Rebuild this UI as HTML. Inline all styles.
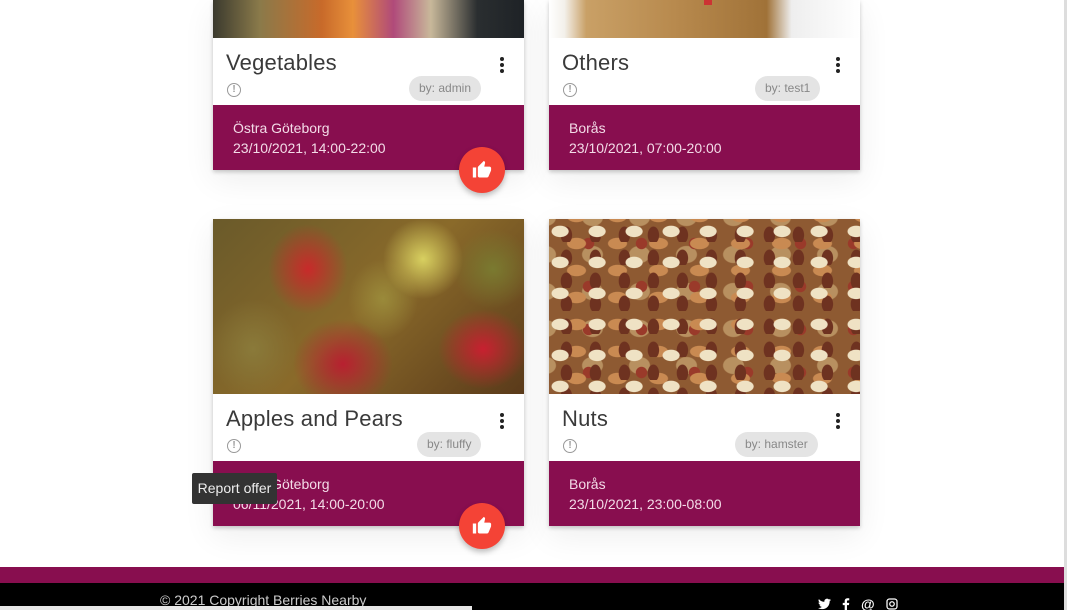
<!DOCTYPE html>
<html><head><meta charset="utf-8"><style>
*{box-sizing:border-box;margin:0;padding:0}
body{width:1067px;height:610px;overflow:hidden;background:#fff;font-family:"Liberation Sans",sans-serif;position:relative}
.card{position:absolute;width:311px;background:#fff;box-shadow:0 2px 4px rgba(0,0,0,.2),0 10px 30px rgba(0,0,0,.07)}
.img{width:100%}
.title{position:absolute;left:13px;font-size:22px;color:#3a3a3a;font-weight:300;letter-spacing:.2px}
.dots{position:absolute;right:20px;width:4px}
.dots i{display:block;width:4px;height:4px;border-radius:50%;background:#222;margin-bottom:2px}
.warn{position:absolute;left:14px;width:14px;height:14px;border:1.5px solid #999;border-radius:50%;font-size:10px;color:#999;text-align:center;line-height:11px;font-weight:bold}
.by{position:absolute;height:25px;border-radius:13px;background:#e4e4e4;color:#888;font-size:12px;line-height:25px;padding:0 10px}
.mag{position:absolute;left:0;width:100%;height:65px;background:#880e4f;color:#f3dbe7;font-size:14px;padding:14px 20px;line-height:19.5px}
.fab{position:absolute;width:46px;height:46px;border-radius:50%;background:#f44336;box-shadow:0 3px 6px rgba(0,0,0,.25)}
.fab svg{position:absolute;left:13px;top:13px}
</style></head><body>
<div style="position:absolute;right:0;top:0;width:3px;height:610px;background:#ddd"></div>

<div class="card" style="left:213px;top:0;height:170px">
 <div class="img" style="height:38px;background:linear-gradient(90deg,#3b3a2e 0%,#8a7a4a 15%,#c86a2a 35%,#e8903a 45%,#b04a7a 58%,#c8b89a 70%,#2a2e30 85%,#1e2226 100%)"></div>
 <div class="title" style="top:50px">Vegetables</div>
 <div class="dots" style="top:57px"><i></i><i></i><i></i></div>
 <div class="warn" style="top:83px">!</div>
 <div class="by" style="left:196px;top:76px">by: admin</div>
 <div class="mag" style="top:105px">Östra Göteborg<br>23/10/2021, 14:00-22:00</div>
</div>
<div class="fab" style="left:459px;top:147px"><svg width="20" height="20" viewBox="0 0 24 24"><path fill="#fff" d="M1 21h4V9H1v12zm22-11c0-1.1-.9-2-2-2h-6.3l1-4.6v-.3c0-.4-.2-.8-.4-1.1L14.2 1 7.6 7.6C7.2 7.9 7 8.4 7 9v10c0 1.1.9 2 2 2h9c.8 0 1.5-.5 1.8-1.2l3-7.1c.1-.2.1-.5.1-.7v-2z"/></svg></div>

<div class="card" style="left:549px;top:0;height:170px">
 <div class="img" style="height:38px;background:linear-gradient(90deg,#fff 0%,#f3f0ea 5%,#c9a066 12%,#b88a4e 40%,#a07238 70%,#eee 78%,#fff 100%)"><div style="position:absolute;left:155px;top:0;width:8px;height:5px;background:#c33"></div></div>
 <div class="title" style="top:50px">Others</div>
 <div class="dots" style="top:57px"><i></i><i></i><i></i></div>
 <div class="warn" style="top:83px">!</div>
 <div class="by" style="left:206px;top:76px">by: test1</div>
 <div class="mag" style="top:105px">Borås<br>23/10/2021, 07:00-20:00</div>
</div>

<div class="card" style="left:213px;top:219px;height:307px">
 <div class="img" style="height:175px;background:
 radial-gradient(ellipse 40px 45px at 95px 50px,#c82a2a,transparent),
 radial-gradient(ellipse 40px 40px at 210px 40px,#d8d060,transparent),
 radial-gradient(ellipse 45px 40px at 270px 130px,#c82030,transparent),
 radial-gradient(ellipse 50px 45px at 130px 145px,#b82030,transparent),
 radial-gradient(ellipse 45px 50px at 40px 130px,#8a7a3a,transparent),
 radial-gradient(ellipse 35px 40px at 170px 80px,#9a8a3a,transparent),
 radial-gradient(ellipse 40px 40px at 280px 50px,#7a7a30,transparent),
 linear-gradient(135deg,#6a5a2a,#8a6a2a 50%,#5a3a1a)"></div>
 <div class="title" style="top:187px">Apples and Pears</div>
 <div class="dots" style="top:194px"><i></i><i></i><i></i></div>
 <div class="warn" style="top:220px">!</div>
 <div class="by" style="left:204px;top:213px">by: fluffy</div>
 <div class="mag" style="top:242px">Östra Göteborg<br>06/11/2021, 14:00-20:00</div>
</div>
<div class="fab" style="left:459px;top:503px"><svg width="20" height="20" viewBox="0 0 24 24"><path fill="#fff" d="M1 21h4V9H1v12zm22-11c0-1.1-.9-2-2-2h-6.3l1-4.6v-.3c0-.4-.2-.8-.4-1.1L14.2 1 7.6 7.6C7.2 7.9 7 8.4 7 9v10c0 1.1.9 2 2 2h9c.8 0 1.5-.5 1.8-1.2l3-7.1c.1-.2.1-.5.1-.7v-2z"/></svg></div>
<div style="position:absolute;left:192px;top:473px;width:85px;height:31px;background:#333;color:#eee;font-size:14px;line-height:31px;text-align:center;border-radius:2px">Report offer</div>

<div class="card" style="left:549px;top:219px;height:307px">
 <div class="img" style="height:175px;background:
 radial-gradient(ellipse 9px 6px at 30% 40%,#efe2c4 0 90%,transparent) 0 0/37px 31px,
 radial-gradient(ellipse 6px 9px at 60% 70%,#6e3220 0 90%,transparent) 0 0/29px 23px,
 radial-gradient(ellipse 10px 6px at 50% 50%,#c98a52 0 90%,transparent) 7px 11px/41px 27px,
 radial-gradient(ellipse 6px 6px at 50% 50%,#9a3a2a 0 90%,transparent) 13px 3px/53px 43px,
 radial-gradient(ellipse 11px 9px at 50% 50%,#b89060 0 90%,transparent) 20px 17px/47px 37px,
 #8e5a32"></div>
 <div class="title" style="top:187px">Nuts</div>
 <div class="dots" style="top:194px"><i></i><i></i><i></i></div>
 <div class="warn" style="top:220px">!</div>
 <div class="by" style="left:186px;top:213px">by: hamster</div>
 <div class="mag" style="top:242px">Borås<br>23/10/2021, 23:00-08:00</div>
</div>

<div style="position:absolute;left:0;top:567px;width:1064px;height:16px;background:#880e4f"></div>
<div style="position:absolute;left:0;top:583px;width:1064px;height:27px;background:#000"></div>
<div style="position:absolute;left:160px;top:592px;color:#ccc;font-size:14px">© 2021 Copyright Berries Nearby</div>
<div style="position:absolute;left:0;top:606px;width:472px;height:4px;background:#e8e8e8"></div>
<div style="position:absolute;left:818px;top:596px;color:#fff;font-size:13px;font-weight:bold;display:flex;gap:11px;align-items:center">
 <svg width="13" height="12" viewBox="0 0 24 20"><path fill="#fff" d="M24 2.4a10 10 0 0 1-2.8.8A5 5 0 0 0 23.3.5a10 10 0 0 1-3.1 1.2A4.9 4.9 0 0 0 11.8 6 14 14 0 0 1 1.7.9a4.9 4.9 0 0 0 1.5 6.6 5 5 0 0 1-2.2-.6 4.9 4.9 0 0 0 3.9 4.9 5 5 0 0 1-2.2.1 4.9 4.9 0 0 0 4.600 3.4A9.9 9.9 0 0 1 0 17.3 14 14 0 0 0 7.5 19.5c9 0 14-7.5 14-14v-.6A10 10 0 0 0 24 2.4z"/></svg>
 <svg width="8" height="13" viewBox="0 0 10 20"><path fill="#fff" d="M6.5 20v-9h3l.5-3.5H6.5V5.3c0-1 .3-1.7 1.7-1.7H10V.4A24 24 0 0 0 7.4.3C4.8.3 3 1.900 3 4.8v2.7H0V11h3v9z"/></svg>
 <span style="font-size:14px">@</span>
 <svg width="12" height="12" viewBox="0 0 24 24"><rect x="2" y="2" width="20" height="20" rx="5" fill="none" stroke="#fff" stroke-width="2.5"/><circle cx="12" cy="12" r="4.5" fill="none" stroke="#fff" stroke-width="2.5"/></svg>
</div>
</body></html>
